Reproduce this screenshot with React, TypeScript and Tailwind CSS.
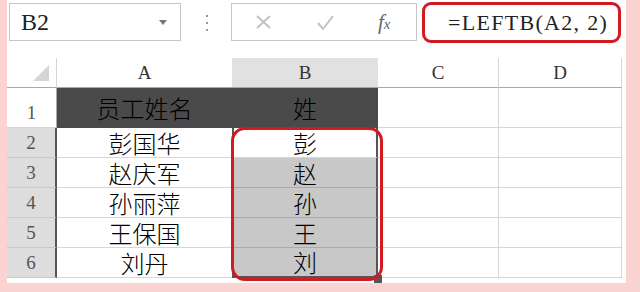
import React from "react";

const serif = "[font-family:'Liberation_Serif',serif]";
const cjk = "[font-family:'Noto_Sans_CJK_SC',sans-serif]";

const rows = [
  { n: "2", name: "彭国华", last: "彭" },
  { n: "3", name: "赵庆军", last: "赵" },
  { n: "4", name: "孙丽萍", last: "孙" },
  { n: "5", name: "王保国", last: "王" },
  { n: "6", name: "刘丹", last: "刘" },
];

function Toolbar() {
  return (
    <div className="h-[58px] flex items-start pt-[3px]">
      {/* Name box */}
      <div className="ml-[2px] w-[172px] h-[38px] border border-[#c6c6c6] flex items-center justify-between pl-[11px] pr-[13px]">
        <span className={`${serif} text-[24px] leading-none text-[#222]`}>B2</span>
        <span className="w-0 h-0 border-l-[4px] border-r-[4px] border-t-[5px] border-l-transparent border-r-transparent border-t-[#777]" />
      </div>

      {/* Separator dots */}
      <div className="ml-[25px] mt-[12px] flex flex-col gap-[5px]">
        <span className="w-[2px] h-[2px] bg-[#999]" />
        <span className="w-[2px] h-[2px] bg-[#999]" />
        <span className="w-[2px] h-[2px] bg-[#999]" />
      </div>

      {/* Cancel / enter / fx */}
      <div className="ml-[23px] w-[186px] h-[38px] border border-[#c6c6c6] flex items-center pl-[23px]">
        <svg width="17" height="16" viewBox="0 0 17 16">
          <path d="M2 2 L15 14 M15 2 L2 14" stroke="#c2c2c2" strokeWidth="2" fill="none" />
        </svg>
        <svg width="19" height="17" viewBox="0 0 19 17" className="ml-[44px]">
          <path d="M2 9 L7 15 L17 2" stroke="#c2c2c2" strokeWidth="2" fill="none" />
        </svg>
        <span className={`${serif} italic ml-[43px] text-[#666] leading-none`}>
          <span className="text-[21px]">f</span>
          <span className="text-[15px]">x</span>
        </span>
      </div>

      {/* Formula input */}
      <div className="ml-[5px] -mt-[1px] w-[199px] h-[41px] border-[3px] border-[#d11a22] rounded-[9px] flex items-center pl-[23px]">
        <span className={`${serif} text-[22px] leading-none tracking-[1.3px] text-[#222]`}>=LEFTB(A2, 2)</span>
      </div>
    </div>
  );
}

function Sheet() {
  const head = `${serif} text-[19px] leading-none text-[#333] flex items-center justify-center`;
  const num = `${serif} text-[19px] leading-none text-[#555] flex items-center justify-center`;
  const cell = `${cjk} text-black text-[24px] leading-none font-light flex items-center justify-center`;
  const grid = "border-r border-b border-[#d6d6d6]";
  return (
    <div className="relative grid grid-cols-[50px_175px_146px_121px_123px] grid-rows-[30px_40px_30px_30px_30px_30px_30px]">
      {/* Column headers */}
      <div className="border-r border-[#d6d6d6] border-b border-b-[#a8a8a8] flex items-end justify-end pr-[7px] pb-[6px]">
        <svg width="16" height="16" viewBox="0 0 16 16">
          <path d="M16 0 L16 16 L0 16 Z" fill="#d4d4d4" />
        </svg>
      </div>
      <div className={`${head} border-b border-[#a8a8a8]`}>A</div>
      <div className={`${head} bg-[#e1e1e1] border-b border-[#a8a8a8]`}>B</div>
      <div className={`${head} border-r border-[#d6d6d6] border-b border-b-[#a8a8a8]`}>C</div>
      <div className={`${head} border-r border-[#d6d6d6] border-b border-b-[#a8a8a8]`}>D</div>

      {/* Row 1 */}
      <div className={`${num} items-end pb-[5px] border-r border-[#a8a8a8] border-b border-b-[#d6d6d6]`}>1</div>
      <div className={`${cell} bg-[#4a4a4a]`}>员工姓名</div>
      <div className={`${cell} bg-[#4a4a4a]`}>姓</div>
      <div className={grid} />
      <div className={grid} />

      {rows.map((r, i) => (
        <React.Fragment key={r.n}>
          <div className={`${num} bg-[#dddddd] border-b border-[#c8c8c8] border-r-2 border-r-[#555]`}>{r.n}</div>
          <div className={`${cell} border-b border-[#d6d6d6]`}>{r.name}</div>
          <div
            className={`${cell} border-l-2 border-r-2 border-[#555] ${
              i === 0 ? "bg-white border-b border-b-[#d6d6d6]" : "bg-[#c8c8c8]"
            } ${i === rows.length - 1 ? "border-b-2 border-b-[#555]" : i > 0 ? "border-b border-b-[#aaaaaa]" : ""}`}
          >
            {r.last}
          </div>
          <div className={grid} />
          <div className={grid} />
        </React.Fragment>
      ))}

      {/* Fill handle */}
      <div className="absolute left-[367px] top-[217px] w-[8px] h-[8px] bg-[#555]" />
      {/* Red highlight around B2:B6 */}
      <div className="absolute left-[224px] top-[69px] w-[152px] h-[154px] border-[3px] border-[#d11a22] rounded-[14px] pointer-events-none" />
    </div>
  );
}

export default function App() {
  return (
    <div className="w-[640px] h-[292px] bg-[#fcd3d3] pl-[7px]">
      <div className="w-[619px] h-[283px] bg-white flex flex-col">
        <Toolbar />
        <Sheet />
      </div>
    </div>
  );
}
